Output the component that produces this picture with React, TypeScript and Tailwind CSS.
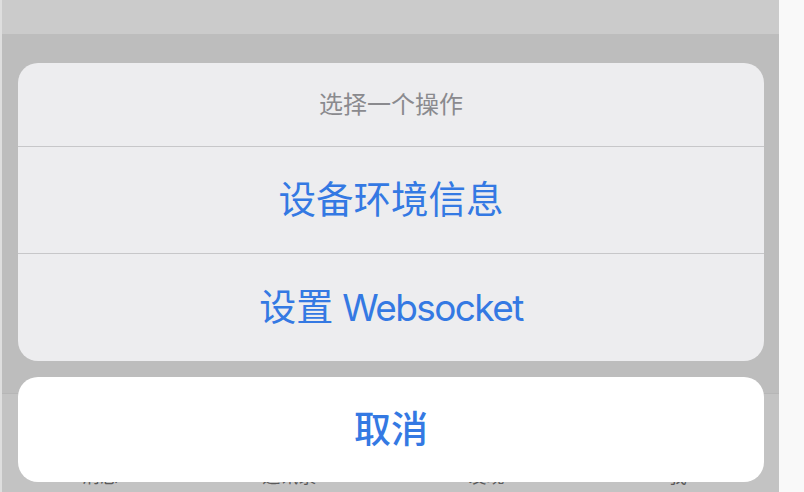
import React from "react";

const font = { fontFamily: 'Inter, "Noto Sans CJK SC", "Noto Sans", sans-serif' };

export default function App() {
  return (
    <div className="w-[804px] h-[492px] overflow-hidden flex bg-[#f9f9f9]" style={font}>
      <div className="w-[2px] h-full bg-[#dedede]" />
      <div className="relative w-[777px] h-full flex flex-col bg-[#bdbdbd]">
        <div className="h-[34px] bg-[#cbcbcb]" />
        <div className="flex-1" />
        <div className="h-[99px] border-t border-[#b6b6b6] bg-[#c3c3c3] pt-[74px] grid grid-cols-4 text-[18px] text-[#5a5a5a] leading-none">
          <div className="pl-[80px]">消息</div>
          <div className="pl-[66px]">通讯录</div>
          <div className="pl-[78px]">发现</div>
          <div className="pl-[84px]">我</div>
        </div>

        <div className="absolute left-[16px] right-[15px] top-[63px] flex flex-col gap-[16px]">
          <div className="rounded-[20px] bg-[#ededef] overflow-hidden flex flex-col">
            <div className="h-[83px] flex items-center justify-center text-[24px] text-[#8a8a8e]">
              选择一个操作
            </div>
            <div className="h-[107px] border-t border-[#c7c7c9] flex items-center justify-center text-[37.5px] text-[#3479e3]">
              设备环境信息
            </div>
            <div className="h-[108px] border-t border-[#c7c7c9] flex items-center justify-center text-[37px] text-[#3479e3]">
              <span>设置</span>
              <span className="ml-[9px] tracking-[-1.6px]">Websocket</span>
            </div>
          </div>
          <div className="h-[105px] rounded-[20px] bg-white flex items-center justify-center text-[37px] font-medium text-[#3479e3]">
            取消
          </div>
        </div>
      </div>
    </div>
  );
}
